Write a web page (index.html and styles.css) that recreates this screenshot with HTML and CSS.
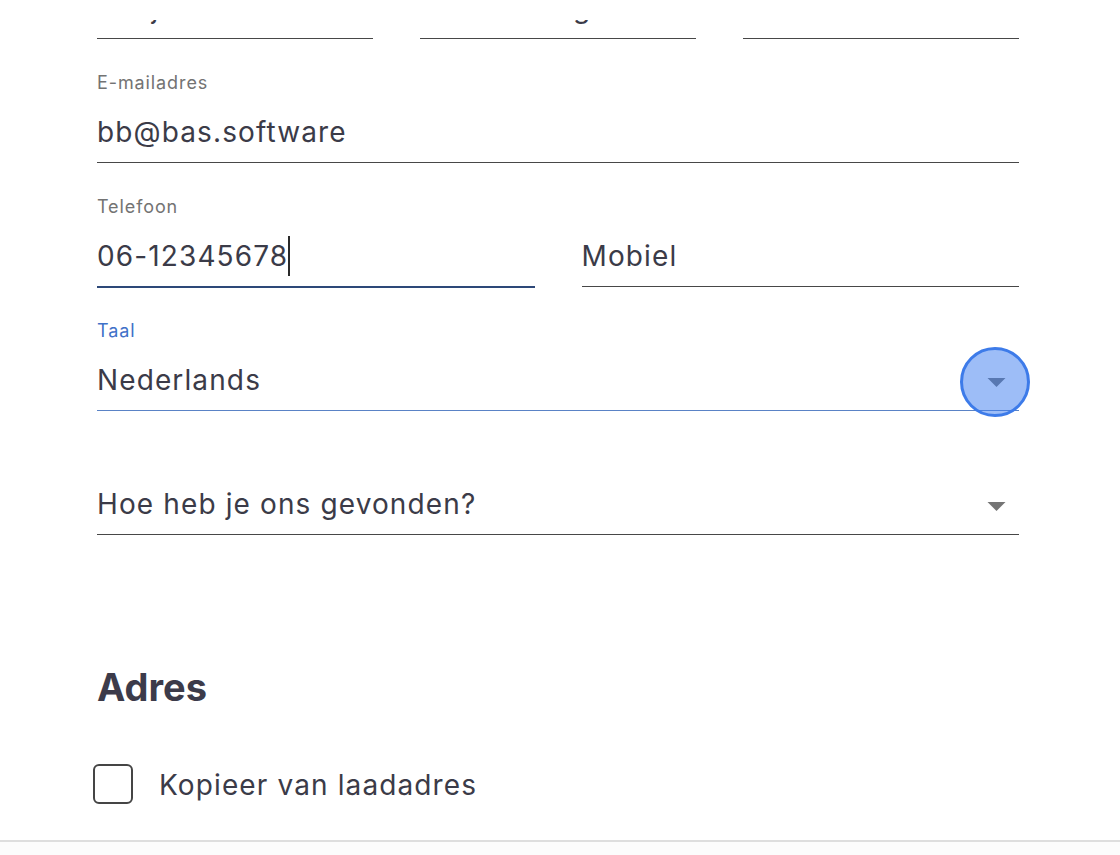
FILE: index.html
```html
<!DOCTYPE html>
<html lang="nl">
<head>
<meta charset="utf-8">
<title>Gegevens</title>
<link rel="stylesheet" href="styles.css">
</head>
<body>
<main class="sheet">
  <div class="topbar"></div>
  <div class="scroller">
    <form class="form">
      <div class="row row-3">
        <div class="field">
          <span class="label">Voornaam</span>
          <span class="value">Benjamin</span>
        </div>
        <div class="field">
          <span class="label">Tussenvoegsel</span>
          <span class="value">Tussenvoegsel</span>
        </div>
        <div class="field">
          <span class="label">Achternaam</span>
          <span class="value">Bakker</span>
        </div>
      </div>

      <div class="field">
        <span class="label">E-mailadres</span>
        <span class="value">bb@bas.software</span>
      </div>

      <div class="row row-2">
        <div class="field focused">
          <span class="label">Telefoon</span>
          <span class="value">06-12345678<span class="caret"></span></span>
        </div>
        <div class="field">
          <span class="label"></span>
          <span class="value">Mobiel</span>
        </div>
      </div>

      <div class="field select active">
        <span class="label">Taal</span>
        <span class="value">Nederlands</span>
        <svg class="arrow" viewBox="0 0 20 10" aria-hidden="true"><path d="M0 0h20L10 10z"/></svg>
        <span class="ripple"></span>
      </div>

      <div class="field select">
        <span class="label"></span>
        <span class="value">Hoe heb je ons gevonden?</span>
        <svg class="arrow" viewBox="0 0 20 10" aria-hidden="true"><path d="M0 0h20L10 10z"/></svg>
      </div>

      <h2 class="section-title">Adres</h2>

      <label class="check">
        <span class="box"></span>
        <span class="check-text">Kopieer van laadadres</span>
      </label>
    </form>
  </div>
  <div class="footer"></div>
</main>
</body>
</html>
```

FILE: styles.css
```css
html, body {
  margin: 0;
  padding: 0;
  background: #ffffff;
}

body {
  font-family: Inter, "Noto Sans", "Liberation Sans", sans-serif;
  color: #3b3b48;
  height: 855px;
  overflow: hidden;
}

.sheet {
  display: flex;
  flex-direction: column;
  height: 855px;
}

.topbar {
  height: 20px;
  flex: none;
  background: #ffffff;
  position: relative;
  z-index: 1;
}

.scroller {
  flex: 1;
  overflow: hidden;
}

.form {
  width: 922px;
  margin: -105px 0 0 97px;
  display: flex;
  flex-direction: column;
}

.row {
  display: grid;
  column-gap: 47px;
}

.row-3 { grid-template-columns: repeat(3, 1fr); }
.row-2 { grid-template-columns: 1fr 1fr; }

.field {
  position: relative;
  display: flex;
  flex-direction: column;
  padding-top: 34px;
  padding-bottom: 12px;
  border-bottom: 1px solid #474747;
}

.label {
  display: block;
  height: 20px;
  font-size: 18px;
  line-height: 20px;
  letter-spacing: 0.05em;
  color: #737373;
  white-space: nowrap;
}

.value {
  display: block;
  height: 36px;
  margin-top: 21px;
  font-size: 28px;
  line-height: 36px;
  letter-spacing: 0.04em;
  white-space: nowrap;
}

/* text cursor; negative margins keep it from growing the line box */
.caret {
  display: inline-block;
  width: 1.5px;
  height: 40px;
  margin: -2px 0;
  vertical-align: top;
  background: #2a2a2a;
}

.field.focused {
  border-bottom-color: #2d4878;
  box-shadow: 0 1px 0 #2d4878;
}

.field.active {
  border-bottom-color: #5a83c6;
}

.field.active .label {
  color: #3f71c8;
}

.arrow {
  position: absolute;
  right: 13px;
  bottom: 23px;
  width: 19px;
  height: 9px;
  fill: #757575;
}

/* click highlight over the dropdown toggle */
.ripple {
  position: absolute;
  right: -11px;
  bottom: -7px;
  width: 64px;
  height: 64px;
  border: 3px solid #3d7be9;
  border-radius: 50%;
  background: rgba(60, 123, 240, 0.5);
}

.section-title {
  margin: 129px 0 0;
  font-size: 38px;
  line-height: 46px;
  font-weight: 700;
  color: #3c3b4a;
}

.check {
  display: flex;
  align-items: center;
  gap: 26px;
  margin: 54px 0 0 -4px;
}

.box {
  flex: none;
  width: 36px;
  height: 36px;
  border: 2px solid #454545;
  border-radius: 6px;
}

.check-text {
  padding-top: 2px;
  font-size: 28px;
  line-height: 36px;
  letter-spacing: 0.04em;
}

.footer {
  flex: none;
  height: 13px;
  border-top: 2px solid #dedede;
  background: #fcfcfc;
}
```
